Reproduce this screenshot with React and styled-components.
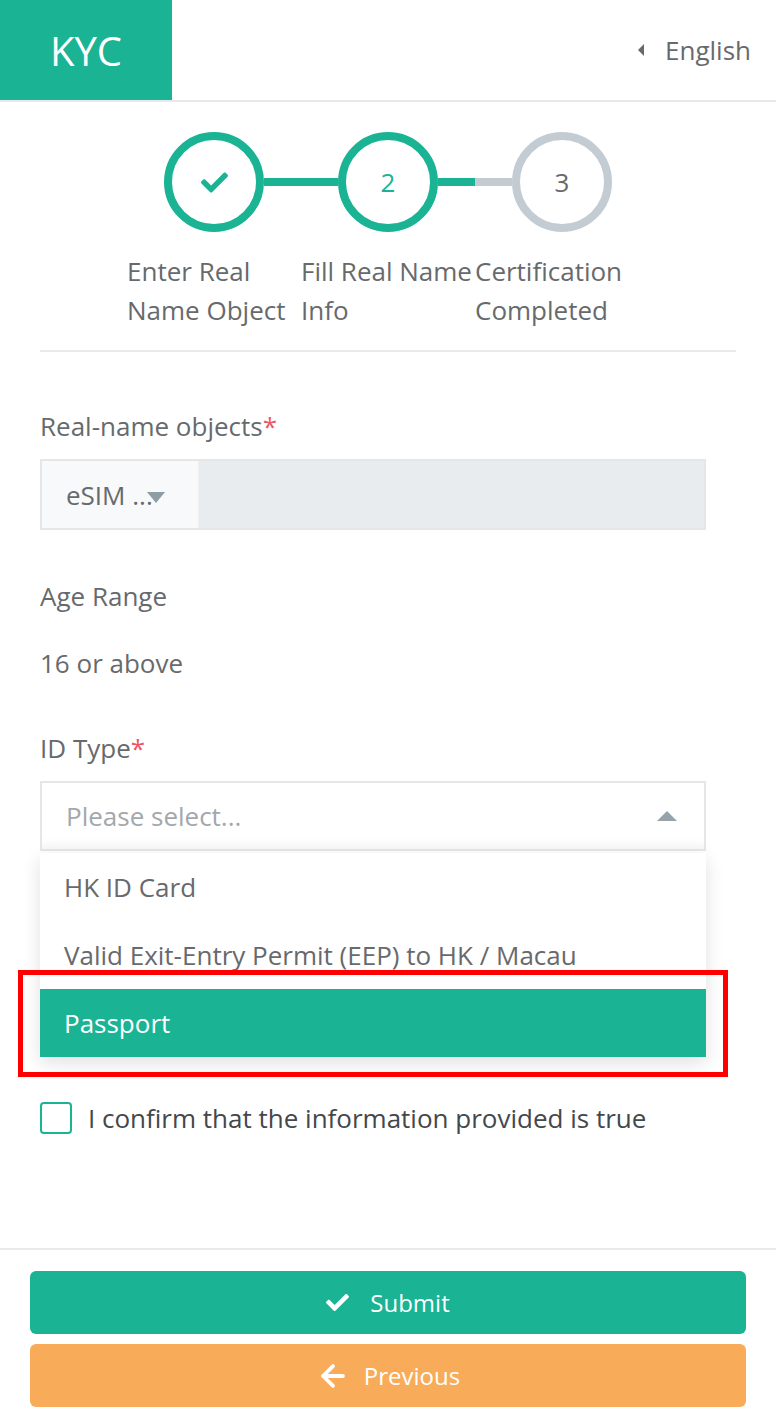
import React from 'react'
import styled, { createGlobalStyle } from 'styled-components'
import { FaCheck } from 'react-icons/fa'
import { ArrowLeft } from 'lucide-react'

const green = '#1ab394'
const orange = '#f8ac59'
const grey = '#c4ccd3'
const line = '#e7eaec'

const GlobalStyle = createGlobalStyle`
  html, body {
    margin: 0;
    padding: 0;
    background: #fff;
  }
  body {
    font-family: "Open Sans", "Liberation Sans", sans-serif;
    color: #676a6c;
    -webkit-font-smoothing: antialiased;
  }
  * {
    box-sizing: border-box;
  }
`

const Page = styled.div`
  min-height: 100vh;
  display: flex;
  flex-direction: column;
`

const Header = styled.header`
  display: flex;
  justify-content: space-between;
  align-items: center;
  height: 102px;
  border-bottom: 2px solid ${line};
`

const Brand = styled.div`
  width: 172px;
  height: 100px;
  display: flex;
  align-items: center;
  justify-content: center;
  background: ${green};
  color: #fff;
  font-size: 40px;
`

const Lang = styled.div`
  display: flex;
  align-items: center;
  gap: 21px;
  padding-right: 25px;
  font-size: 26px;
  color: #676a6c;
`

const LeftCaret = styled.span`
  width: 0;
  height: 0;
  border-top: 6px solid transparent;
  border-bottom: 6px solid transparent;
  border-right: 6px solid #676a6c;
`

const Stepper = styled.section`
  padding-top: 30px;
  display: flex;
  flex-direction: column;
  align-items: center;
`

const Track = styled.div`
  display: flex;
  align-items: center;
`

const Circle = styled.div`
  width: 100px;
  height: 100px;
  border-radius: 50%;
  border: 8px solid ${p => (p.$active ? green : grey)};
  display: flex;
  align-items: center;
  justify-content: center;
  font-size: 26px;
  color: ${p => (p.$active ? green : '#676a6c')};
`

const Connector = styled.div`
  width: 74px;
  height: 8px;
  background: ${p => (p.$half ? `linear-gradient(to right, ${green} 50%, ${grey} 50%)` : green)};
`

const StepLabels = styled.div`
  display: grid;
  grid-template-columns: repeat(3, 174px);
  margin-top: 20px;
`

const StepLabel = styled.div`
  font-size: 26px;
  line-height: 39px;
  color: #676a6c;
`

const Divider = styled.hr`
  margin: 20px 40px 0;
  border: none;
  height: 2px;
  background: ${line};
`

const Form = styled.form`
  padding: 0 40px;
  display: flex;
  flex-direction: column;
`

const FieldLabel = styled.div`
  margin-top: ${p => p.$top}px;
  font-size: 26px;
  line-height: 36px;
  color: #676a6c;
`

const Required = styled.span`
  color: #ed5565;
`

const InputGroup = styled.div`
  margin-top: 15px;
  width: 666px;
  height: 71px;
  display: flex;
  border: 2px solid #e5e6e7;
`

const Addon = styled.div`
  width: 157px;
  display: flex;
  align-items: center;
  padding-left: 24px;
  background: #f8f9fa;
  border-right: 1px solid #eef0f2;
  font-size: 26px;
  color: #676a6c;
`

const DownCaret = styled.span`
  margin-left: -6px;
  margin-top: 6px;
  width: 0;
  height: 0;
  border-left: 9px solid transparent;
  border-right: 9px solid transparent;
  border-top: 11px solid #8e9ca4;
`

const DisabledInput = styled.div`
  flex: 1;
  background: #e9ecef;
`

const Value = styled.div`
  margin-top: ${p => p.$top}px;
  font-size: 26px;
  line-height: 36px;
  color: #676a6c;
`

const SelectWrap = styled.div`
  position: relative;
  margin-top: 15px;
  width: 666px;
`

const SelectBox = styled.div`
  height: 70px;
  display: flex;
  align-items: center;
  justify-content: space-between;
  padding: 0 27px 0 24px;
  border: 2px solid #e5e6e7;
  box-shadow: inset 0 -14px 14px -12px rgba(0, 0, 0, 0.05);
  font-size: 26px;
  color: #a3a8ac;
`

const UpCaret = styled.span`
  width: 0;
  height: 0;
  border-left: 10px solid transparent;
  border-right: 10px solid transparent;
  border-bottom: 10px solid #97a3aa;
`

const Menu = styled.ul`
  position: absolute;
  top: calc(100% + 2px);
  left: 0;
  right: 0;
  margin: 0;
  padding: 0;
  list-style: none;
  background: #fff;
  box-shadow: 0 6px 18px rgba(0, 0, 0, 0.12);
  z-index: 1;
`

const MenuItem = styled.li`
  height: 68px;
  display: flex;
  align-items: center;
  padding-left: 24px;
  font-size: 26px;
  background: ${p => (p.$selected ? green : '#fff')};
  color: ${p => (p.$selected ? '#fff' : '#676a6c')};
`

const Highlight = styled.div`
  position: absolute;
  top: 189px;
  left: -22px;
  width: 710px;
  height: 107px;
  border: 5px solid #ff0000;
  pointer-events: none;
  z-index: 2;
`

const ConfirmRow = styled.label`
  margin-top: 249px;
  display: flex;
  align-items: center;
  gap: 16px;
  font-size: 26px;
  color: #43484c;
`

const Checkbox = styled.span`
  width: 32px;
  height: 32px;
  border: 2px solid ${green};
  border-radius: 4px;
`

const Footer = styled.footer`
  margin-top: auto;
  border-top: 2px solid ${line};
  padding: 21px 30px 20px;
  display: flex;
  flex-direction: column;
  gap: 10px;
`

const Button = styled.button`
  height: 63px;
  border: none;
  border-radius: 6px;
  background: ${p => p.$bg};
  color: #fff;
  font-family: inherit;
  font-size: 24px;
  display: flex;
  align-items: center;
  justify-content: center;
  gap: ${p => p.$gap || 21}px;
`

const steps = [
  ['Enter Real', 'Name Object'],
  ['Fill Real Name', 'Info'],
  ['Certification', 'Completed'],
]

const idTypes = ['HK ID Card', 'Valid Exit-Entry Permit (EEP) to HK / Macau', 'Passport']

export default function App() {
  return (
    <Page>
      <GlobalStyle />
      <Header>
        <Brand>KYC</Brand>
        <Lang>
          <LeftCaret />
          English
        </Lang>
      </Header>

      <Stepper>
        <Track>
          <Circle $active>
            <FaCheck size={27} color={green} />
          </Circle>
          <Connector />
          <Circle $active>2</Circle>
          <Connector $half />
          <Circle>3</Circle>
        </Track>
        <StepLabels>
          {steps.map(s => (
            <StepLabel key={s[0]}>
              {s[0]}
              <br />
              {s[1]}
            </StepLabel>
          ))}
        </StepLabels>
      </Stepper>
      <Divider />

      <Form>
        <FieldLabel $top={56}>
          Real-name objects<Required>*</Required>
        </FieldLabel>
        <InputGroup>
          <Addon>
            eSIM ...
            <DownCaret />
          </Addon>
          <DisabledInput />
        </InputGroup>

        <FieldLabel $top={48}>Age Range</FieldLabel>
        <Value $top={31}>16 or above</Value>

        <FieldLabel $top={49}>
          ID Type<Required>*</Required>
        </FieldLabel>
        <SelectWrap>
          <SelectBox>
            Please select...
            <UpCaret />
          </SelectBox>
          <Menu>
            {idTypes.map(t => (
              <MenuItem key={t} $selected={t === 'Passport'}>
                {t}
              </MenuItem>
            ))}
          </Menu>
          <Highlight />
        </SelectWrap>

        <ConfirmRow>
          <Checkbox />
          I confirm that the information provided is true
        </ConfirmRow>
      </Form>

      <Footer>
        <Button type="button" $bg={green}>
          <FaCheck size={23} />
          Submit
        </Button>
        <Button type="button" $bg={orange} $gap={14}>
          <ArrowLeft size={34} strokeWidth={2.7} />
          Previous
        </Button>
      </Footer>
    </Page>
  )
}
